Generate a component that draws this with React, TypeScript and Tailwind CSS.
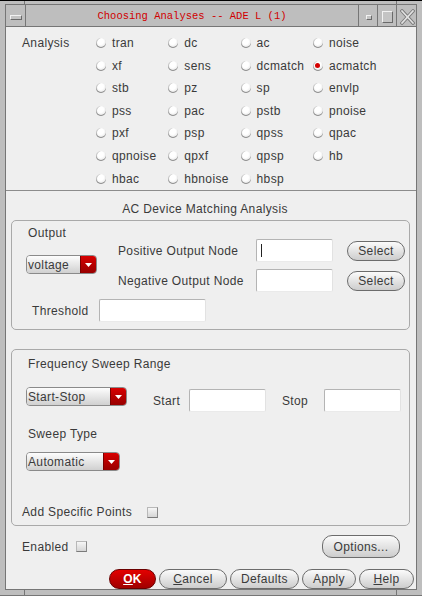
import React from "react";

const txt = "font-['Liberation_Sans',Arial,sans-serif] text-[12px] leading-[14px] tracking-[0.35px] text-[#3a3a3a]";

const rows = [
  ["tran", "dc", "ac", "noise"],
  ["xf", "sens", "dcmatch", "acmatch"],
  ["stb", "pz", "sp", "envlp"],
  ["pss", "pac", "pstb", "pnoise"],
  ["pxf", "psp", "qpss", "qpac"],
  ["qpnoise", "qpxf", "qpsp", "hb"],
  ["hbac", "hbnoise", "hbsp", ""],
];

function Radio({ label, on }: { label: string; on?: boolean }) {
  if (!label) return <div />;
  return (
    <div className="flex items-center">
      <span className="w-[10px] h-[10px] rounded-full flex items-center justify-center bg-[radial-gradient(circle_at_45%_35%,#ffffff_35%,#d4d4d4_100%)] shadow-[inset_0_-1px_0_#8e8e8e,inset_1px_0_0_#c4c4c4]">
        {on && <span className="w-[5px] h-[5px] rounded-full bg-[#d40000]" />}
      </span>
      <span className="ml-[6px]">{label}</span>
    </div>
  );
}

function Combo({ label, w }: { label: string; w: string }) {
  return (
    <div className={`${w} h-[19px] flex rounded-[4px] border border-[#8a8a8a] overflow-hidden`}>
      <div className="flex-1 bg-gradient-to-b from-[#fdfdfd] to-[#d0d0d0] pl-[1px] flex items-center">{label}</div>
      <div className="w-[16px] bg-gradient-to-b from-[#d80000] to-[#980000] flex items-center justify-center border-l border-[#7a0000]">
        <svg width="7" height="4" viewBox="0 0 7 4">
          <path d="M0 0h7L3.5 4z" fill="#ffffff" />
        </svg>
      </div>
    </div>
  );
}

function Field({ w, cursor }: { w: string; cursor?: boolean }) {
  return (
    <div className={`${w} h-[23px] bg-white rounded-[2px] border border-t-[#b4b4b4] border-l-[#b4b4b4] border-r-[#e2e2e2] border-b-[#eaeaea] flex items-center pl-[4px]`}>
      {cursor && <span className="w-[1px] h-[13px] bg-[#222]" />}
    </div>
  );
}

function Btn({ children, w, h = "h-[20px]" }: { children: React.ReactNode; w: string; h?: string }) {
  return (
    <div className={`${w} ${h} rounded-[10px] border border-[#6c6c6c] bg-gradient-to-b from-[#fbfbfb] to-[#cdcdcd] flex items-center justify-center`}>
      {children}
    </div>
  );
}

function Check() {
  return <span className="w-[11px] h-[11px] bg-gradient-to-b from-[#f6f6f6] to-[#d6d6d6] border border-t-[#b8b8b8] border-l-[#b8b8b8] border-r-[#8a8a8a] border-b-[#7a7a7a]" />;
}

function NodeRow({ label, cursor }: { label: string; cursor?: boolean }) {
  return (
    <div className="flex items-center h-[23px]">
      <span className="w-[138px]">{label}</span>
      <Field w="w-[77px]" cursor={cursor} />
      <div className="ml-[14px]">
        <Btn w="w-[58px]">Select</Btn>
      </div>
    </div>
  );
}

const bevel = "bg-[#c4c4c4] border border-t-[#f2f2f2] border-l-[#f2f2f2] border-r-[#6a6a6a] border-b-[#6a6a6a]";

export default function App() {
  return (
    <div className={`w-[422px] h-[596px] bg-[#bebebe] border-t border-black flex flex-col overflow-hidden ${txt}`}>
      {/* top frame strip */}
      <div className="h-[3px] flex">
        <div className="w-[25px] border-r border-[#767676]" />
        <div className="flex-1" />
        <div className="w-[26px] border-l border-[#767676]" />
      </div>

      {/* title bar */}
      <div className="mx-[5px] h-[23px] flex border border-[#767676]">
        <div className="w-[20px] border-r border-[#767676] pt-[10px] pl-[4px]">
          <div className={`w-[12px] h-[5px] ${bevel}`} />
        </div>
        <div className="flex-1 flex items-center justify-center font-['Liberation_Mono',monospace] text-[10.5px] tracking-normal text-[#d00000] whitespace-pre">
          Choosing Analyses -- ADE L (1)
        </div>
        <div className="w-[19px] border-l border-[#767676] pt-[10px] pl-[7px]">
          <div className={`w-[6px] h-[5px] ${bevel}`} />
        </div>
        <div className="w-[19px] border-l border-[#767676] pt-[6px] pl-[4px]">
          <div className={`w-[11px] h-[12px] ${bevel}`} />
        </div>
        <div className="w-[20px] border-l border-[#767676] pt-[4px] pl-[3px]">
          <svg width="15" height="16" viewBox="0 0 15 16">
            <path d="M2 2L13 14M13 2L2 14" stroke="#7a7a7a" strokeWidth="3.4" strokeLinecap="square" />
            <path d="M2 2L13 14M13 2L2 14" stroke="#e2e2e2" strokeWidth="1.6" strokeLinecap="square" />
          </svg>
        </div>
      </div>

      {/* content */}
      <div className="mx-[5px] h-[563px] border-x border-b border-[#767676] bg-[#efefef] flex flex-col">
        {/* analysis choices */}
        <div className="h-[163px] pt-[4.7px] flex">
          <div className="w-[90px] pl-[16px] h-[22.6px] flex items-center">Analysis</div>
          <div className="grid grid-cols-[repeat(4,72.3px)] auto-rows-[22.6px] items-center">
            {rows.flat().map((l, i) => (
              <Radio key={i} label={l} on={l === "acmatch"} />
            ))}
          </div>
        </div>
        <div className="h-[1px] bg-[#8c8c8c]" />

        <div className="pt-[11px] text-center pr-[12px]">AC Device Matching Analysis</div>

        {/* matching box */}
        <div className="mt-[4px] ml-[5px] w-[399px] h-[110px] border border-[#a9a9a9] rounded-[5px] flex flex-col">
          <div className="flex pl-[14px]">
            <div className="w-[92px] flex flex-col">
              <span className="mt-[5px] ml-[2px]">Output</span>
              <div className="mt-[15px]">
                <Combo label="voltage" w="w-[71px]" />
              </div>
            </div>
            <div className="mt-[18px] flex flex-col gap-[7px]">
              <NodeRow label="Positive Output Node" cursor />
              <NodeRow label="Negative Output Node" />
            </div>
          </div>
          <div className="mt-[7px] pl-[20px] flex items-center">
            <span className="w-[67px]">Threshold</span>
            <Field w="w-[107px]" />
          </div>
        </div>

        {/* sweep box */}
        <div className="mt-[19px] ml-[5px] w-[399px] h-[177px] border border-[#a9a9a9] rounded-[5px] flex flex-col">
          <span className="mt-[7px] ml-[16px]">Frequency Sweep Range</span>
          <div className="mt-[16px] ml-[14px] h-[25px] flex items-start">
            <Combo label="Start-Stop" w="w-[101px]" />
            <div className="ml-[26px] mt-[2px] flex items-center">
              <span className="w-[36px]">Start</span>
              <Field w="w-[77px]" />
              <span className="ml-[16px] w-[42px]">Stop</span>
              <Field w="w-[77px]" />
            </div>
          </div>
          <span className="mt-[15px] ml-[16px]">Sweep Type</span>
          <div className="mt-[11px] ml-[14px]">
            <Combo label="Automatic" w="w-[94px]" />
          </div>
          <div className="mt-[34px] ml-[10px] flex items-center">
            <span>Add Specific Points</span>
            <span className="ml-[15px] flex">
              <Check />
            </span>
          </div>
        </div>

        {/* enabled / options */}
        <div className="mt-[9px] h-[23px] px-[16px] flex items-center">
          <span>Enabled</span>
          <span className="ml-[7px] flex">
            <Check />
          </span>
          <div className="flex-1" />
          <Btn w="w-[78px]" h="h-[23px]">Options...</Btn>
        </div>

        {/* bottom buttons */}
        <div className="mt-[11px] h-[20px] flex justify-end gap-[3px] pr-[2px]">
          <div className="w-[47px] h-[20px] rounded-[10px] border border-[#6a0000] bg-gradient-to-b from-[#e40000] to-[#a00000] flex items-center justify-center text-white font-bold">
            <span><span className="underline">O</span>K</span>
          </div>
          <Btn w="w-[68px]">
            <span><span className="underline">C</span>ancel</span>
          </Btn>
          <Btn w="w-[69px]">Defaults</Btn>
          <Btn w="w-[54px]">Apply</Btn>
          <Btn w="w-[55px]">
            <span><span className="underline">H</span>elp</span>
          </Btn>
        </div>
      </div>

      {/* bottom frame strip */}
      <div className="h-[6px] flex border-b border-[#767676]">
        <div className="w-[25px] border-r border-[#767676]" />
        <div className="flex-1" />
        <div className="w-[26px] border-l border-[#767676]" />
      </div>
    </div>
  );
}
